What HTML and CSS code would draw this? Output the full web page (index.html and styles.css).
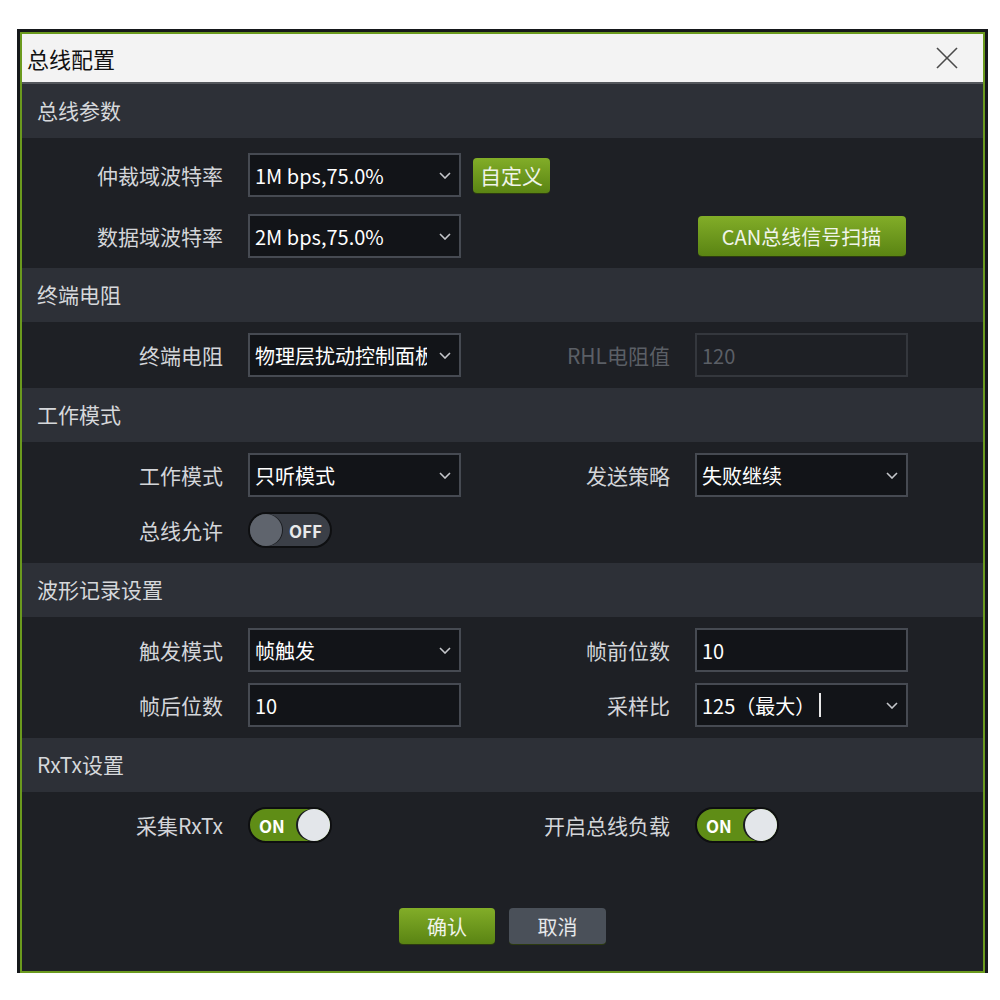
FILE: index.html
```html
<!DOCTYPE html>
<html lang="zh-CN">

<head>
    <meta charset="UTF-8">
    <meta name="viewport" content="width=device-width, initial-scale=1.0">
    <title>总线配置</title>
    <link rel="stylesheet" href="styles.css">
</head>

<body>
    <div class="dialog">
        <div class="titlebar">
            <span class="title">总线配置</span>
            <svg class="close" width="24" height="24" viewBox="0 0 24 24">
                <line x1="2" y1="2" x2="22" y2="22" />
                <line x1="22" y1="2" x2="2" y2="22" />
            </svg>
        </div>

        <div class="section-head">总线参数</div>
        <div class="section-body first">
            <div class="label">仲裁域波特率</div>
            <div class="field select">
                <span>1M bps,75.0%</span>
                <svg class="chevron" width="12" height="7" viewBox="0 0 12 7"><polyline points="1,1 6,6 11,1" /></svg>
            </div>
            <div class="cell"><button class="button small custom">自定义</button></div>
            <div></div>

            <div class="label">数据域波特率</div>
            <div class="field select">
                <span>2M bps,75.0%</span>
                <svg class="chevron" width="12" height="7" viewBox="0 0 12 7"><polyline points="1,1 6,6 11,1" /></svg>
            </div>
            <div></div>
            <div class="cell center"><button class="button scan">CAN总线信号扫描</button></div>
        </div>

        <div class="section-head">终端电阻</div>
        <div class="section-body">
            <div class="label">终端电阻</div>
            <div class="field select">
                <span class="clip">物理层扰动控制面板</span>
                <svg class="chevron" width="12" height="7" viewBox="0 0 12 7"><polyline points="1,1 6,6 11,1" /></svg>
            </div>
            <div class="label disabled">RHL电阻值</div>
            <div class="field input disabled"><span>120</span></div>
        </div>

        <div class="section-head">工作模式</div>
        <div class="section-body">
            <div class="label">工作模式</div>
            <div class="field select">
                <span>只听模式</span>
                <svg class="chevron" width="12" height="7" viewBox="0 0 12 7"><polyline points="1,1 6,6 11,1" /></svg>
            </div>
            <div class="label">发送策略</div>
            <div class="field select">
                <span>失败继续</span>
                <svg class="chevron" width="12" height="7" viewBox="0 0 12 7"><polyline points="1,1 6,6 11,1" /></svg>
            </div>

            <div class="label">总线允许</div>
            <div class="cell">
                <div class="toggle off"><span class="knob"></span><span class="toggle-text">OFF</span></div>
            </div>
        </div>

        <div class="section-head">波形记录设置</div>
        <div class="section-body">
            <div class="label">触发模式</div>
            <div class="field select">
                <span>帧触发</span>
                <svg class="chevron" width="12" height="7" viewBox="0 0 12 7"><polyline points="1,1 6,6 11,1" /></svg>
            </div>
            <div class="label">帧前位数</div>
            <div class="field input"><span>10</span></div>

            <div class="label">帧后位数</div>
            <div class="field input"><span>10</span></div>
            <div class="label">采样比</div>
            <div class="field select">
                <span>125（最大）</span><span class="caret"></span>
                <svg class="chevron" width="12" height="7" viewBox="0 0 12 7"><polyline points="1,1 6,6 11,1" /></svg>
            </div>
        </div>

        <div class="section-head">RxTx设置</div>
        <div class="section-body last">
            <div class="label">采集RxTx</div>
            <div class="cell">
                <div class="toggle on"><span class="toggle-text">ON</span><span class="knob"></span></div>
            </div>
            <div class="label">开启总线负载</div>
            <div class="cell">
                <div class="toggle on"><span class="toggle-text">ON</span><span class="knob"></span></div>
            </div>
        </div>
        <div class="actions">
            <button class="button confirm">确认</button>
            <button class="button cancel">取消</button>
        </div>
    </div>
</body>

</html>
```

FILE: styles.css
```css
body {
    margin: 0;
    background-color: #ffffff;
    font-family: "Noto Sans CJK SC", "Noto Sans", sans-serif;
}

.dialog {
    box-sizing: border-box;
    width: 965px;
    height: 941px;
    margin: 32px 0 0 20px;
    border: 2px solid #6b9a1e;
    box-shadow: 0 0 0 3px #16181b;
    background-color: #1e2025;
    display: flex;
    flex-direction: column;
}

.titlebar {
    height: 48px;
    background-color: #f3f3f3;
    border-bottom: 2px solid #54575c;
    display: flex;
    align-items: center;
    justify-content: space-between;
    padding: 0 24px 0 5px;
}

.title {
    font-size: 22px;
    color: #111111;
}

.close line {
    stroke: #4a4a4a;
    stroke-width: 1.6;
}

.section-head {
    height: 54px;
    line-height: 52px;
    padding-left: 15px;
    background-color: #2d3037;
    color: #d6d8db;
    font-size: 21px;
}

.section-body {
    display: grid;
    grid-template-columns: 201px 213px 184px 213px;
    grid-auto-rows: 44px;
    column-gap: 25px;
    row-gap: 11px;
    padding: 11px 0;
}

.section-body.first {
    padding: 15px 0 10px;
    row-gap: 17px;
}

.section-body.last {
    padding-bottom: 0;
}

.label {
    align-self: center;
    text-align: right;
    font-size: 21px;
    color: #d3d5d9;
}

.label.disabled {
    color: #5b5f66;
}

.cell {
    display: flex;
    align-items: center;
}

.cell.center {
    justify-content: center;
}

.field {
    box-sizing: border-box;
    height: 44px;
    border: 2px solid #464a52;
    background-color: #121418;
    display: flex;
    align-items: center;
    padding: 0 8px 0 5px;
    color: #ffffff;
    font-size: 20px;
}

.field .clip {
    flex: 1;
    overflow: hidden;
    white-space: nowrap;
    margin-right: 12px;
}

.field .chevron {
    margin-left: auto;
    flex: none;
}

.chevron polyline {
    fill: none;
    stroke: #c4c6ca;
    stroke-width: 1.6;
}

.field.disabled {
    background-color: #1e2025;
    border-color: #34373d;
    color: #5b5f66;
}

.caret {
    width: 2px;
    height: 24px;
    margin-left: 4px;
    background-color: #e8e8e8;
}

.button {
    border: none;
    border-radius: 4px;
    font-family: inherit;
    font-size: 20px;
    color: #f0f4ea;
    cursor: pointer;
    background: linear-gradient(#82ad28, #5a8413);
    box-shadow: 0 1px 0 #2c3a10;
}

.button.custom {
    width: 77px;
    height: 35px;
    margin-left: -13px;
    padding: 0;
    font-size: 21px;
}

.button.scan {
    width: 208px;
    height: 40px;
    padding: 0;
}

.toggle {
    box-sizing: border-box;
    width: 84px;
    height: 36px;
    border-radius: 18px;
    border: 2px solid #0e0f11;
    display: flex;
    align-items: center;
    font-size: 17px;
    font-weight: bold;
    color: #ffffff;
}

.toggle .knob {
    width: 32px;
    height: 32px;
    border-radius: 50%;
    flex: none;
}

.toggle.on {
    background-color: #5f8d16;
    justify-content: space-between;
    padding-left: 9px;
}

.toggle.on .knob {
    background-color: #e3e6ea;
    box-shadow: -2px 0 0 #1b1d20;
}

.toggle.off {
    background-color: #3b3f47;
}

.toggle.off .knob {
    background-color: #5f646d;
    box-shadow: 1px 0 0 #1b1d20;
}

.toggle.off .toggle-text {
    margin-left: 7px;
    color: #e8e9ea;
}

.actions {
    display: flex;
    justify-content: center;
    gap: 14px;
    margin-top: 61px;
}

.button.confirm,
.button.cancel {
    width: 96px;
    height: 36px;
    padding: 0;
}

.button.cancel {
    width: 97px;
    background: #4a5059;
    color: #e6e8ea;
}
```
